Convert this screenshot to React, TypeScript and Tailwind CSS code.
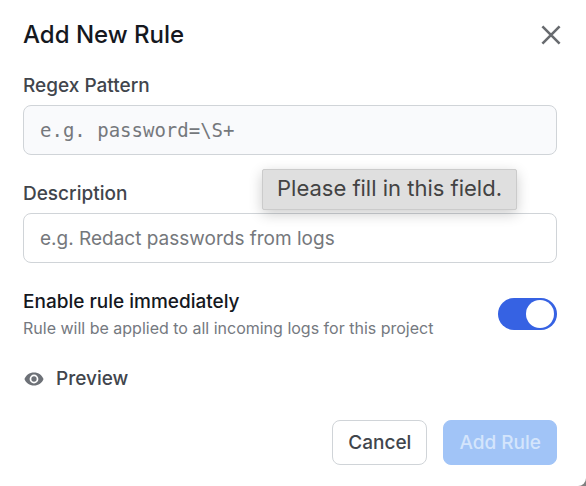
import { useState } from 'react';

export default function App() {
  const [pattern, setPattern] = useState('');
  const [description, setDescription] = useState('');
  const [enabled, setEnabled] = useState(true);

  return (
    <div className="min-h-screen bg-[#808080]">
      <div className="min-h-screen rounded-br-lg bg-white pl-[23px] pr-[29px] pt-4 pb-5 font-['Inter',sans-serif]">
        <div className="flex items-center justify-between h-[38px]">
          <h2 className="text-2xl font-medium text-[#15181e]">Add New Rule</h2>
          <button type="button" aria-label="Close" className="-mr-1 text-[#686b6f]">
            <svg className="w-5 h-5" viewBox="0 0 20 20" fill="none" stroke="currentColor" strokeWidth="2.6">
              <path d="M1.4 1.4l17.2 17.2M18.6 1.4L1.4 18.6" />
            </svg>
          </button>
        </div>

        <form className="mt-[18px]" onSubmit={(e) => e.preventDefault()}>
          <label htmlFor="pattern" className="block text-[19px] leading-7 font-medium text-[#41454c]">Regex Pattern</label>
          <div className="relative mt-[5px]">
            <input
              id="pattern"
              value={pattern}
              onChange={(e) => setPattern(e.target.value)}
              placeholder="e.g. password=\S+"
              className="block w-full h-[50px] rounded-lg border border-[#d0d4d8] bg-[#f9fafc] px-4 font-['DejaVu_Sans_Mono',monospace] text-[19px] placeholder:text-[#75787c]"
            />
            <div role="tooltip" className="absolute right-10 top-16 z-10 h-[41px] rounded-xs border border-[#cbcbcb] bg-[#dfdfdf] px-[14px] text-[22px] leading-9 text-[#434343] shadow-[0_4px_14px_rgba(0,0,0,0.2)] whitespace-nowrap">
              Please fill in this field.
            </div>
          </div>

          <label htmlFor="description" className="mt-[25px] block text-[19px] leading-7 font-medium text-[#41454c]">Description</label>
          <input
            id="description"
            value={description}
            onChange={(e) => setDescription(e.target.value)}
            placeholder="e.g. Redact passwords from logs"
            className="mt-[5px] block w-full h-[50px] rounded-lg border border-[#d0d4d8] bg-transparent px-4 text-[19px] placeholder:text-[#75787c]"
          />

          <div className="mt-[25px] flex items-center justify-between">
            <label htmlFor="enabled">
              <span className="block text-[19px] leading-7 font-medium text-[#15181e]">Enable rule immediately</span>
              <span className="block text-base leading-6 text-[#75797f]">Rule will be applied to all incoming logs for this project</span>
            </label>
            <button
              id="enabled"
              type="button"
              role="switch"
              aria-checked={enabled}
              onClick={() => setEnabled(!enabled)}
              className={`flex w-[59px] h-8 items-center rounded-full px-[3px] ${enabled ? 'justify-end bg-[#3662e3]' : 'justify-start bg-gray-300'}`}
            >
              <span className="block w-7 h-7 rounded-full bg-white" />
            </button>
          </div>

          <button type="button" className="mt-[25px] flex items-center gap-[11px] text-[19px] leading-7 font-medium text-[#41454c]">
            <svg className="w-[22px] h-[22px] text-[#6d7177]" viewBox="0 0 24 24" fill="currentColor">
              <path d="M12 4.8C7 4.8 3.2 7.700 1.600 12c1.600 4.300 5.400 7.200 10.400 7.200s8.800-2.900 10.400-7.200C20.800 7.700 17 4.800 12 4.800zM12 16.800a4.800 4.800 0 110-9.600 4.800 4.800 0 010 9.600zM12 9.100a2.900 2.900 0 100 5.800 2.900 2.900 0 000-5.800z" />
            </svg>
            Preview
          </button>

          <div className="mt-[27px] flex justify-end gap-4">
            <button type="button" className="h-[45px] rounded-lg border border-[#d0d4d8] bg-white px-[15px] text-[19px] leading-7 font-medium text-[#41454c]">Cancel</button>
            <button type="submit" disabled className="h-[45px] rounded-lg border border-[#a1c4f7] bg-[#a1c4f7] px-[15px] text-[19px] leading-7 font-medium text-[#d4e5fc]">Add Rule</button>
          </div>
        </form>
      </div>
    </div>
  );
}
